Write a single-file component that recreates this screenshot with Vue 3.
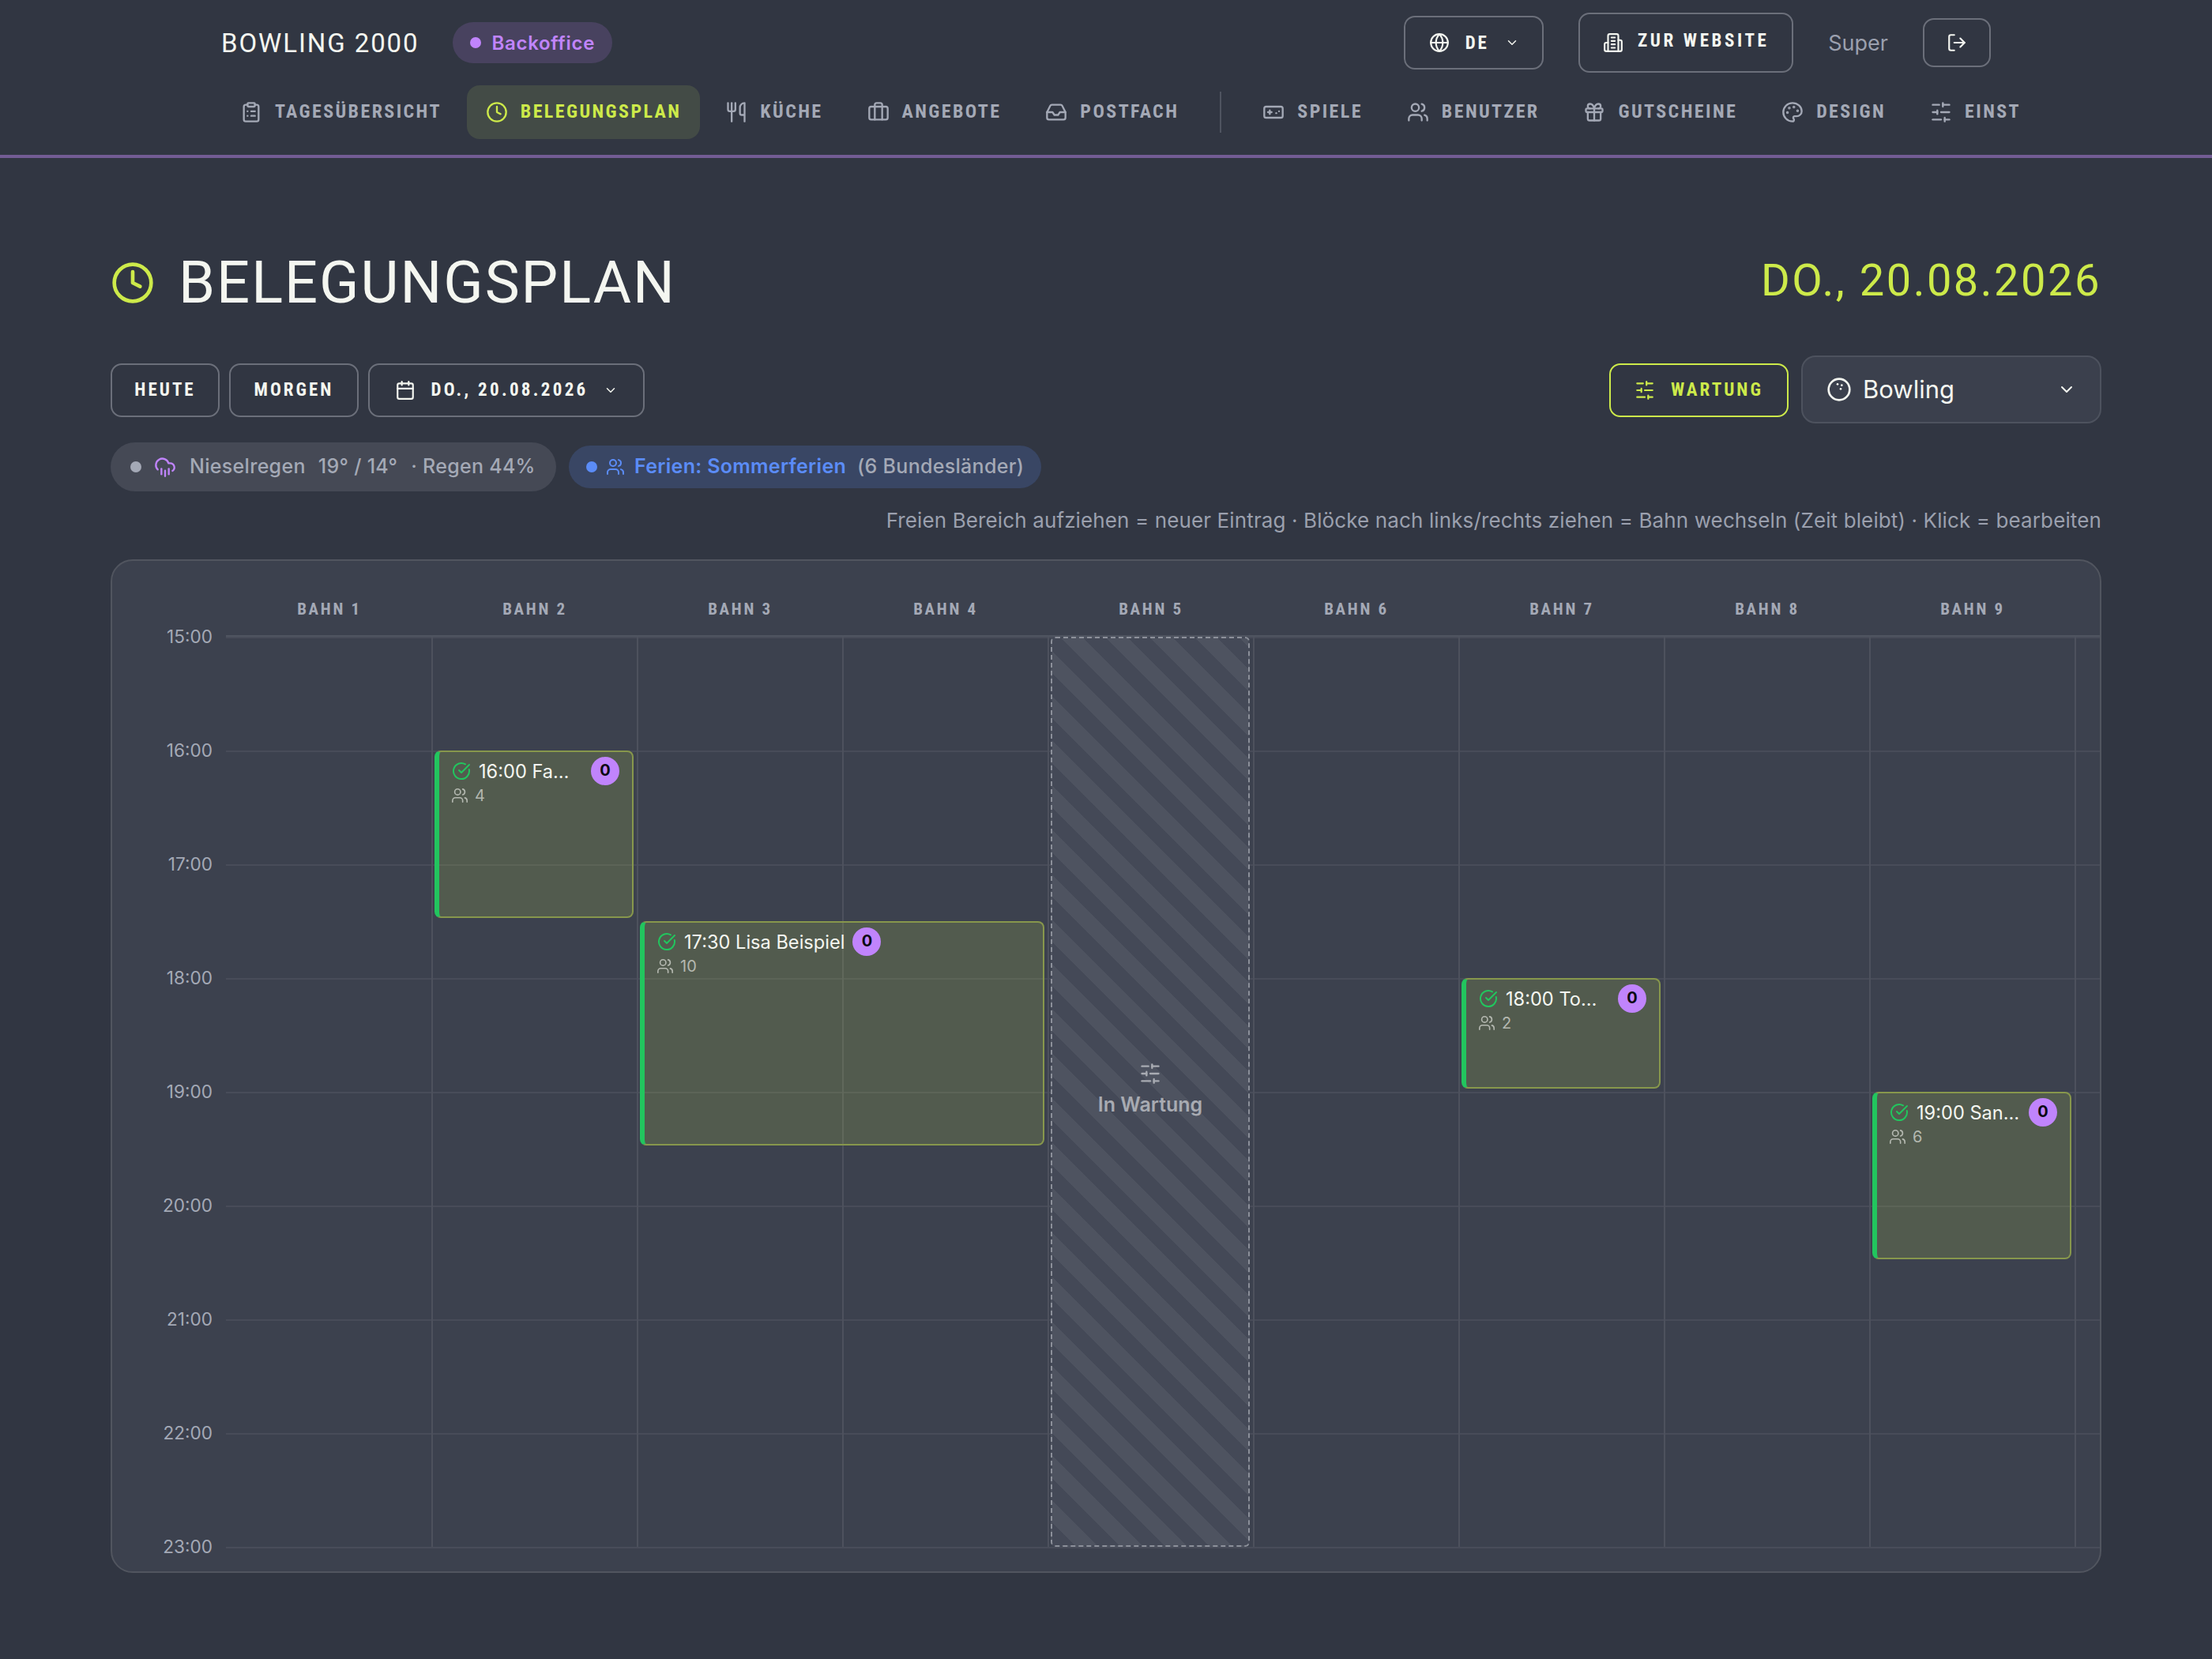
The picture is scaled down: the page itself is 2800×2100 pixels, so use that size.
<script setup>
const icons = {
  clipboard: '<rect x="8" y="2" width="8" height="4" rx="1"/><path d="M16 4h2a2 2 0 0 1 2 2v14a2 2 0 0 1-2 2H6a2 2 0 0 1-2-2V6a2 2 0 0 1 2-2h2"/><path d="M12 11h4"/><path d="M12 16h4"/><path d="M8 11h.01"/><path d="M8 16h.01"/>',
  clock: '<circle cx="12" cy="12" r="10"/><polyline points="12 6 12 12 16 14"/>',
  utensils: '<path d="M3 2v7c0 1.1.9 2 2 2h4a2 2 0 0 0 2-2V2"/><path d="M7 2v20"/><path d="M21 15V2a5 5 0 0 0-5 5v6c0 1.1.9 2 2 2h3Zm0 0v7"/>',
  briefcase: '<path d="M16 20V4a2 2 0 0 0-2-2h-4a2 2 0 0 0-2 2v16"/><rect width="20" height="14" x="2" y="6" rx="2"/>',
  inbox: '<polyline points="22 12 16 12 14 15 10 15 8 12 2 12"/><path d="M5.45 5.11 2 12v6a2 2 0 0 0 2 2h16a2 2 0 0 0 2-2v-6l-3.45-6.89A2 2 0 0 0 16.76 4H7.24a2 2 0 0 0-1.79 1.11z"/>',
  gamepad: '<line x1="6" x2="10" y1="12" y2="12"/><line x1="8" x2="8" y1="10" y2="14"/><line x1="15" x2="15.01" y1="13" y2="13"/><line x1="18" x2="18.01" y1="11" y2="11"/><rect width="20" height="12" x="2" y="6" rx="2"/>',
  users: '<path d="M16 21v-2a4 4 0 0 0-4-4H6a4 4 0 0 0-4 4v2"/><circle cx="9" cy="7" r="4"/><path d="M22 21v-2a4 4 0 0 0-3-3.87"/><path d="M16 3.13a4 4 0 0 1 0 7.75"/>',
  gift: '<rect x="3" y="8" width="18" height="4" rx="1"/><path d="M12 8v13"/><path d="M19 12v7a2 2 0 0 1-2 2H7a2 2 0 0 1-2-2v-7"/><path d="M7.5 8a2.5 2.5 0 0 1 0-5A4.8 8 0 0 1 12 8a4.8 8 0 0 1 4.5-5 2.5 2.5 0 0 1 0 5"/>',
  palette: '<circle cx="13.5" cy="6.5" r=".5" fill="currentColor"/><circle cx="17.5" cy="10.5" r=".5" fill="currentColor"/><circle cx="8.5" cy="7.5" r=".5" fill="currentColor"/><circle cx="6.5" cy="12.5" r=".5" fill="currentColor"/><path d="M12 2C6.5 2 2 6.5 2 12s4.5 10 10 10c.926 0 1.648-.746 1.648-1.688 0-.437-.18-.835-.437-1.125-.29-.289-.438-.652-.438-1.125a1.64 1.64 0 0 1 1.668-1.668h1.996c3.051 0 5.555-2.503 5.555-5.554C21.965 6.012 17.461 2 12 2z"/>',
  sliders: '<line x1="21" x2="14" y1="4" y2="4"/><line x1="10" x2="3" y1="4" y2="4"/><line x1="21" x2="12" y1="12" y2="12"/><line x1="8" x2="3" y1="12" y2="12"/><line x1="21" x2="16" y1="20" y2="20"/><line x1="12" x2="3" y1="20" y2="20"/><line x1="14" x2="14" y1="2" y2="6"/><line x1="8" x2="8" y1="10" y2="14"/><line x1="16" x2="16" y1="18" y2="22"/>',
  globe: '<circle cx="12" cy="12" r="10"/><path d="M12 2a14.5 14.5 0 0 0 0 20 14.5 14.5 0 0 0 0-20"/><path d="M2 12h20"/>',
  chevron: '<path d="m6 9 6 6 6-6"/>',
  building: '<path d="M6 22V4a2 2 0 0 1 2-2h8a2 2 0 0 1 2 2v18Z"/><path d="M6 12H4a2 2 0 0 0-2 2v6a2 2 0 0 0 2 2h2"/><path d="M18 9h2a2 2 0 0 1 2 2v9a2 2 0 0 1-2 2h-2"/><path d="M10 6h4"/><path d="M10 10h4"/><path d="M10 14h4"/><path d="M10 18h4"/>',
  logout: '<path d="M9 21H5a2 2 0 0 1-2-2V5a2 2 0 0 1 2-2h4"/><polyline points="16 17 21 12 16 7"/><line x1="21" x2="9" y1="12" y2="12"/>',
  calendar: '<path d="M8 2v4"/><path d="M16 2v4"/><rect width="18" height="18" x="3" y="4" rx="2"/><path d="M3 10h18"/>',
  rain: '<path d="M4 14.899A7 7 0 1 1 15.71 8h1.79a4.5 4.5 0 0 1 2.5 8.242"/><path d="M16 14v6"/><path d="M8 14v6"/><path d="M12 16v6"/>',
  check: '<path d="M21.801 10A10 10 0 1 1 17 3.335"/><path d="m9 11 3 3L22 4"/>',
  ball: '<circle cx="12" cy="12" r="10"/><path d="M10.5 7h.01"/><path d="M14.5 8h.01"/><path d="M13.5 11.5h.01"/>'
}

const navLeft = [
  { icon: 'clipboard', label: 'TAGESÜBERSICHT' },
  { icon: 'clock', label: 'BELEGUNGSPLAN', active: true },
  { icon: 'utensils', label: 'KÜCHE' },
  { icon: 'briefcase', label: 'ANGEBOTE' },
  { icon: 'inbox', label: 'POSTFACH' }
]
const navRight = [
  { icon: 'gamepad', label: 'SPIELE' },
  { icon: 'users', label: 'BENUTZER' },
  { icon: 'gift', label: 'GUTSCHEINE' },
  { icon: 'palette', label: 'DESIGN' },
  { icon: 'sliders', label: 'EINST' }
]
const lanes = [1, 2, 3, 4, 5, 6, 7, 8, 9]
const hours = ['15:00', '16:00', '17:00', '18:00', '19:00', '20:00', '21:00', '22:00', '23:00']
const HOUR = 144
const LANE = 260
const events = [
  { lane: 2, span: 1, start: 1, dur: 1.5, title: '16:00 Fa…', people: 4 },
  { lane: 3, span: 2, start: 2.5, dur: 2, title: '17:30 Lisa Beispiel', people: 10 },
  { lane: 7, span: 1, start: 3, dur: 1, title: '18:00 To…', people: 2 },
  { lane: 9, span: 1, start: 4, dur: 1.5, title: '19:00 San…', people: 6 }
]
const eventStyle = (e) => ({
  left: `${(e.lane - 1) * LANE + 2}px`,
  top: `${e.start * HOUR}px`,
  width: `${e.span * LANE - 8}px`,
  height: `${e.dur * HOUR - 4}px`
})
const blockStyle = {
  left: `${4 * LANE + 2}px`,
  width: `${LANE - 8}px`
}
</script>

<template>
  <div class="page">
    <header class="topbar">
      <div class="topbar-inner">
        <div class="top-row">
          <div class="brand-group">
            <span class="brand">BOWLING 2000</span>
            <span class="role-pill"><i class="role-dot"></i>Backoffice</span>
          </div>
          <div class="top-actions">
            <button class="btn btn-lang">
              <svg class="ic ic-26" viewBox="0 0 24 24" v-html="icons.globe"></svg>
              <span>DE</span>
              <svg class="ic ic-18" viewBox="0 0 24 24" v-html="icons.chevron"></svg>
            </button>
            <button class="btn btn-site">
              <svg class="ic ic-26" viewBox="0 0 24 24" v-html="icons.building"></svg>
              <span class="site-label">ZUR WEBSITE</span>
            </button>
            <span class="user">Super</span>
            <button class="btn btn-logout">
              <svg class="ic ic-26" viewBox="0 0 24 24" v-html="icons.logout"></svg>
            </button>
          </div>
        </div>
        <nav class="nav">
          <a v-for="n in navLeft" :key="n.label" class="nav-item" :class="{ active: n.active }">
            <svg class="ic ic-28" viewBox="0 0 24 24" v-html="icons[n.icon]"></svg>
            <span>{{ n.label }}</span>
          </a>
          <span class="nav-sep"></span>
          <a v-for="n in navRight" :key="n.label" class="nav-item">
            <svg class="ic ic-28" viewBox="0 0 24 24" v-html="icons[n.icon]"></svg>
            <span>{{ n.label }}</span>
          </a>
        </nav>
      </div>
    </header>

    <main class="main">
      <div class="title-row">
        <h1 class="title">
          <svg class="ic title-icon" viewBox="0 0 24 24" v-html="icons.clock"></svg>
          <span>BELEGUNGSPLAN</span>
        </h1>
        <div class="date-big">DO., 20.08.2026</div>
      </div>

      <div class="toolbar">
        <div class="tool-left">
          <button class="btn btn-tool btn-heute">HEUTE</button>
          <button class="btn btn-tool btn-morgen">MORGEN</button>
          <button class="btn btn-tool btn-date">
            <svg class="ic ic-26" viewBox="0 0 24 24" v-html="icons.calendar"></svg>
            <span>DO., 20.08.2026</span>
            <svg class="ic ic-18" viewBox="0 0 24 24" v-html="icons.chevron"></svg>
          </button>
        </div>
        <div class="tool-right">
          <button class="btn btn-tool btn-maint">
            <svg class="ic ic-26" viewBox="0 0 24 24" v-html="icons.sliders"></svg>
            <span>WARTUNG</span>
          </button>
          <div class="select">
            <svg class="ic ic-32" viewBox="0 0 24 24" v-html="icons.ball"></svg>
            <span class="select-text">Bowling</span>
            <svg class="ic ic-24" viewBox="0 0 24 24" v-html="icons.chevron"></svg>
          </div>
        </div>
      </div>

      <div class="pills">
        <div class="pill pill-weather">
          <i class="pill-dot grey"></i>
          <svg class="ic ic-28 rain" viewBox="0 0 24 24" v-html="icons.rain"></svg>
          <span class="w-a">Nieselregen</span>
          <span class="w-b">19° / 14°</span>
          <span class="w-c">· Regen 44%</span>
        </div>
        <div class="pill pill-holiday">
          <i class="pill-dot blue"></i>
          <svg class="ic ic-24 hol-ic" viewBox="0 0 24 24" v-html="icons.users"></svg>
          <span class="h-a">Ferien: Sommerferien</span>
          <span class="h-b">(6 Bundesländer)</span>
        </div>
      </div>

      <p class="hint">Freien Bereich aufziehen = neuer Eintrag · Blöcke nach links/rechts ziehen = Bahn wechseln (Zeit bleibt) · Klick = bearbeiten</p>

      <section class="board">
        <div class="board-head">
          <div v-for="l in lanes" :key="l" class="lane-head">BAHN {{ l }}</div>
        </div>
        <div class="board-body">
          <div class="axis">
            <div v-for="h in hours" :key="h" class="tick"><span>{{ h }}</span></div>
          </div>
          <div class="grid">
            <div v-for="h in 8" :key="h" class="hour-row"></div>
            <div class="hour-end"></div>
            <div class="lane-overlay">
              <div class="lanes">
                <div v-for="l in lanes" :key="l" class="lane"></div>
              </div>
              <div class="block" :style="blockStyle">
                <svg class="ic ic-28" viewBox="0 0 24 24" v-html="icons.sliders"></svg>
                <span>In Wartung</span>
              </div>
              <article v-for="e in events" :key="e.title" class="event" :class="{ narrow: e.span === 1 }" :style="eventStyle(e)">
                <div class="ev-row">
                  <svg class="ic ev-check" viewBox="0 0 24 24" v-html="icons.check"></svg>
                  <span class="ev-title">{{ e.title }}</span>
                  <span class="ev-badge">0</span>
                </div>
                <div class="ev-sub">
                  <svg class="ic ev-users" viewBox="0 0 24 24" v-html="icons.users"></svg>
                  <span>{{ e.people }}</span>
                </div>
              </article>
            </div>
          </div>
        </div>
      </section>
    </main>
  </div>
</template>

<style>
html, body { margin: 0; background: #313642; }
</style>

<style scoped>
.page {
  width: 2800px;
  min-height: 2100px;
  background: #313642;
  font-family: "Inter", "Liberation Sans", sans-serif;
  color: #f4f6f0;
}
.ic {
  fill: none;
  stroke: currentColor;
  stroke-width: 2;
  stroke-linecap: round;
  stroke-linejoin: round;
  flex: none;
  display: block;
}
.ic-18 { width: 18px; height: 18px; }
.ic-24 { width: 24px; height: 24px; }
.ic-26 { width: 26px; height: 26px; }
.ic-28 { width: 28px; height: 28px; }
.ic-32 { width: 32px; height: 32px; }

.topbar {
  border-bottom: 4px solid #735c94;
  height: 200px;
  box-sizing: border-box;
}
.topbar-inner {
  width: 2240px;
  margin: 0 auto;
  padding-top: 16px;
}
.top-row {
  display: flex;
  justify-content: space-between;
  align-items: center;
  height: 76px;
}
.brand-group { display: flex; align-items: center; gap: 43px; }
.brand {
  font-family: "Roboto", sans-serif;
  font-size: 33px;
  font-weight: 400;
  letter-spacing: 1.9px;
  color: #f4f6f0;
}
.role-pill {
  display: flex;
  align-items: center;
  gap: 13px;
  height: 52px;
  padding: 0 22px;
  border-radius: 26px;
  background: #48425f;
  color: #c084fc;
  font-size: 24px;
  font-weight: 600;
  letter-spacing: .7px;
}
.role-dot { width: 14px; height: 14px; border-radius: 50%; background: #c084fc; }
.top-actions { display: flex; align-items: center; gap: 44px; }
.btn {
  display: flex;
  align-items: center;
  justify-content: center;
  background: transparent;
  border: 2px solid #6b6f7a;
  border-radius: 14px;
  color: #f4f6f0;
  font-family: "Roboto", sans-serif;
  font-stretch: 75%;
  font-weight: 700;
  box-sizing: border-box;
  padding: 0;
}
.btn-lang {
  width: 177px;
  height: 68px;
  gap: 20px;
  font-size: 23px;
  letter-spacing: 3px;
}
.btn-site {
  width: 272px;
  height: 76px;
  gap: 18px;
  font-size: 23px;
  letter-spacing: 3.6px;
}
.site-label { margin-bottom: 6px; }
.user { font-size: 27px; color: #9ba0ae; }
.btn-logout { width: 86px; height: 62px; }

.nav {
  display: flex;
  align-items: center;
  gap: 8px;
  margin-top: 16px;
  height: 68px;
  white-space: nowrap;
}
.nav-item {
  display: flex;
  align-items: center;
  gap: 16px;
  height: 68px;
  padding: 0 24px;
  border-radius: 16px;
  box-sizing: border-box;
  color: #a4a9b6;
  font-family: "Roboto", sans-serif;
  font-stretch: 75%;
  font-weight: 700;
  font-size: 24px;
  letter-spacing: 2.4px;
  flex: none;
}
.nav-item span { margin-bottom: 2px; }
.nav-item.active { background: #434b46; color: #cdea4a; }
.nav-sep {
  width: 2px;
  height: 52px;
  background: #4f5460;
  margin: 0 20px;
  flex: none;
}

.main {
  width: 2520px;
  margin: 0 auto;
  padding-top: 122px;
}
.title-row {
  display: flex;
  justify-content: space-between;
  align-items: center;
  height: 72px;
}
.title {
  display: flex;
  align-items: center;
  gap: 30px;
  margin: 0;
  font-family: "Roboto", sans-serif;
  font-weight: 400;
  font-size: 74px;
  line-height: 72px;
  letter-spacing: 2px;
  color: #f4f6f0;
}
.title-icon { width: 56px; height: 56px; color: #cdea4a; }
.date-big {
  font-family: "Roboto", sans-serif;
  font-size: 56px;
  line-height: 72px;
  letter-spacing: 2.5px;
  color: #cdea4a;
  margin-top: -6px;
}
.toolbar {
  display: flex;
  justify-content: space-between;
  align-items: center;
  margin-top: 56px;
  height: 86px;
}
.tool-left, .tool-right { display: flex; align-items: center; gap: 12px; }
.tool-right { gap: 16px; }
.btn-tool {
  height: 68px;
  margin-top: 1px;
  font-size: 23px;
  letter-spacing: 3px;
}
.btn-heute { width: 138px; }
.btn-morgen { width: 164px; }
.btn-date { width: 350px; gap: 20px; letter-spacing: 3.3px; }
.btn-maint { width: 227px; color: #cdea4a; border-color: #cdea4a; gap: 20px; }
.select {
  display: flex;
  align-items: center;
  width: 380px;
  height: 86px;
  box-sizing: border-box;
  padding: 0 30px;
  border: 2px solid #4d525e;
  border-radius: 18px;
  background: #3b404d;
  font-size: 31px;
  color: #f4f6f0;
}
.select-text { margin-left: 14px; margin-bottom: 2px; flex: 1; }
.pills {
  display: flex;
  align-items: center;
  gap: 16px;
  margin-top: 24px;
  height: 62px;
  font-size: 25px;
  font-weight: 500;
  letter-spacing: .3px;
  color: #a4a9b6;
}
.pill { display: flex; align-items: center; border-radius: 31px; box-sizing: border-box; }
.pill span { margin-bottom: 2px; }
.pill-weather { height: 62px; width: 564px; padding-left: 25px; background: #454955; }
.pill-holiday { height: 54px; padding: 0 22px; background: #394664; }
.pill-dot { width: 14px; height: 14px; border-radius: 50%; flex: none; }
.pill-dot.grey { background: #a4a9b6; }
.pill-dot.blue { background: #5b8cf7; }
.rain { color: #c084fc; margin-left: 16px; }
.w-a { margin-left: 17px; }
.w-b { margin-left: 16px; }
.w-c { margin-left: 17px; }
.hol-ic { color: #5b8cf7; margin-left: 11px; }
.h-a { margin-left: 12px; color: #5b8cf7; font-weight: 600; }
.h-b { margin-left: 14px; }
.hint {
  margin: 21px 0 0;
  height: 32px;
  line-height: 32px;
  text-align: right;
  font-size: 26px;
  letter-spacing: .12px;
  color: #9ba0ae;
}
.board {
  margin-top: 33px;
  box-sizing: border-box;
  height: 1283px;
  border: 2px solid #51555f;
  border-radius: 28px;
  background: #3c414e;
}
.board-head {
  display: grid;
  grid-template-columns: repeat(9, 260px);
  margin-left: 145px;
  height: 96px;
  padding-top: 48px;
  box-sizing: border-box;
}
.lane-head {
  text-align: center;
  font-family: "Roboto", sans-serif;
  font-stretch: 75%;
  font-weight: 700;
  font-size: 21px;
  line-height: 26px;
  letter-spacing: 2.7px;
  color: #a4a9b6;
}
.board-body {
  display: flex;
}
.axis {
  width: 144px;
  flex: none;
  box-sizing: border-box;
  padding-right: 17px;
  text-align: right;
  font-size: 22.6px;
  color: #a4a9b6;
}
.tick { height: 144px; line-height: 0; }
.tick:last-child { height: 0; }
.tick span { display: block; }
.grid {
  flex: 1;
  position: relative;
  border-top: 2px solid #4f5460;
  margin-top: -2px;
}
.hour-row {
  box-sizing: border-box;
  height: 144px;
  border-top: 2px solid #484c59;
}
.hour-end { height: 2px; background: #484c59; }
.lane-overlay {
  position: absolute;
  left: 2px;
  right: 0;
  top: 0;
  height: 1152px;
}
.lanes {
  display: grid;
  grid-template-columns: repeat(9, 260px);
  height: 100%;
}
.lane { border-right: 2px solid #4d515d; }
.block {
  position: absolute;
  top: 0;
  height: 1152px;
  box-sizing: border-box;
  border: 2px dashed #8c909a;
  border-radius: 6px;
  padding-bottom: 6px;
  display: flex;
  flex-direction: column;
  align-items: center;
  justify-content: center;
  gap: 10px;
  color: #a8abb2;
  font-size: 25px;
  font-weight: 600;
  background: repeating-linear-gradient(45deg, #444957 0 20px, #4e5360 20px 40px);
}
.event {
  position: absolute;
  box-sizing: border-box;
  border: 2px solid #87974c;
  border-left: 6px solid #22c55e;
  border-radius: 8px;
  background: rgba(210, 240, 80, 0.15);
  padding: 6px 16px 0 16px;
}
.ev-row { display: flex; align-items: center; height: 36px; }
.ev-check { width: 24px; height: 24px; color: #22c55e; margin-right: 10px; }
.ev-title {
  white-space: nowrap;
  font-size: 23.6px;
  color: #f4f6f0;
}
.ev-badge {
  flex: none;
  width: 36px;
  height: 36px;
  margin-left: 10px;
  border-radius: 50%;
  background: #c084fc;
  color: #0c0a14;
  font-size: 20px;
  font-weight: 700;
  line-height: 34px;
  text-align: center;
}
.narrow .ev-badge { margin-left: auto; }
.ev-sub {
  display: flex;
  align-items: center;
  gap: 8px;
  margin-top: 1px;
  height: 24px;
  font-size: 20px;
  color: #b4b8b0;
}
.ev-users { width: 22px; height: 22px; stroke-width: 1.8; margin-left: -1px; }
</style>
